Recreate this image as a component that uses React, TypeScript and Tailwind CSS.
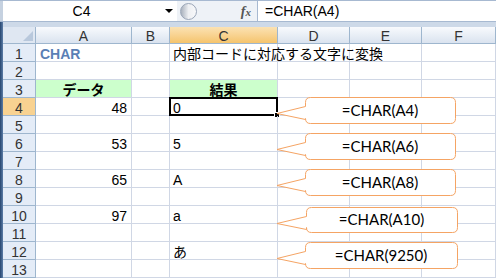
import React from 'react'

const FONT = '"Liberation Sans", "Noto Sans CJK JP", sans-serif'

interface Row {
  n: number
  a?: string
  c?: string
  head?: boolean
}

const rows: Row[] = [
  { n: 1, a: 'CHAR', c: '内部コードに対応する文字に変換' },
  { n: 2 },
  { n: 3, head: true },
  { n: 4, a: '48', c: '0' },
  { n: 5 },
  { n: 6, a: '53', c: '5' },
  { n: 7 },
  { n: 8, a: '65', c: 'A' },
  { n: 9 },
  { n: 10, a: '97', c: 'a' },
  { n: 11 },
  { n: 12, c: 'あ' },
  { n: 13 },
]

const cols = ['A', 'B', 'C', 'D', 'E', 'F']

// callouts: top edge, left, right, height, label
const callouts = [
  { top: 97, left: 305, right: 455, h: 26, text: '=CHAR(A4)' },
  { top: 133, left: 305, right: 455, h: 26, text: '=CHAR(A6)' },
  { top: 169, left: 305, right: 455, h: 26, text: '=CHAR(A8)' },
  { top: 207, left: 306, right: 457, h: 25, text: '=CHAR(A10)' },
  { top: 242, left: 305, right: 457, h: 26, text: '=CHAR(9250)' },
]

function calloutPath(c: { top: number; left: number; right: number; h: number }) {
  const x0 = c.left + 0.5
  const x1 = c.right + 0.5
  const y0 = c.top + 0.5
  const y1 = c.top + c.h + 0.5
  const r = 5
  const tipX = 277
  const tipY = y0 + 16
  return `M${x0 + r},${y0} H${x1 - r} Q${x1},${y0} ${x1},${y0 + r} V${y1 - r} Q${x1},${y1} ${x1 - r},${y1} H${x0 + r} Q${x0},${y1} ${x0},${y1 - r} V${y0 + 22} L${tipX},${tipY} L${x0},${y0 + 9} V${y0 + r} Q${x0},${y0} ${x0 + r},${y0} Z`
}

const FormulaBar: React.FC = () => (
  <div className="flex h-[22px] border-t border-b border-[#a7b9d1] bg-white text-[14px] text-black">
    <div className="w-[3px] bg-[#c5d1e0]" />
    <div className="flex w-[174px] items-center bg-white">
      <div className="flex-1 text-center">C4</div>
      <div className="flex w-[17px] justify-center">
        <div className="h-0 w-0 border-x-[4px] border-t-[4px] border-x-transparent border-t-black" />
      </div>
    </div>
    <div className="flex w-[80px] items-center bg-[#eef2f7]">
      <div className="ml-[3px] h-[17px] w-[17px] rounded-full border border-[#9aa6b8] bg-gradient-to-r from-[#a9b1bd] via-[#eef0f3] to-[#f7f8fa]" />
      <div
        className="ml-auto mr-[6px] text-[14px] font-bold italic text-[#555]"
        style={{ fontFamily: '"Liberation Serif", serif' }}
      >
        f<span className="text-[11px]">x</span>
      </div>
    </div>
    <div className="flex flex-1 items-center border-l border-[#a7b9d1] pl-[7px]">=CHAR(A4)</div>
  </div>
)

export default function App() {
  return (
    <div
      className="relative h-[278px] w-[496px] overflow-hidden bg-white"
      style={{ fontFamily: FONT }}
    >
      <FormulaBar />
      <div className="flex">
        <div className="w-[3px] shrink-0 bg-gradient-to-r from-[#27466f] to-[#5d7ea8]" />
        <div className="flex-1">
          <div className="h-[5px] bg-[#cdd9e8]" />
          <div className="grid grid-cols-[33px_96px_38px_108px_72px_72px_74px] text-[14px]">
            {/* corner */}
            <div className="relative h-[17px] border-r border-b border-[#9eb6ce] bg-[#dfe7f2]">
              <div className="absolute bottom-[2px] right-[2px] h-0 w-0 border-l-[10px] border-t-[10px] border-l-transparent border-t-transparent border-b-0 border-r-[10px] border-r-[#b8c8dc]" />
            </div>
            {cols.map((c) => (
              <div
                key={c}
                className={`flex h-[17px] items-center justify-center border-r border-b border-[#9eb6ce] pt-[1px] leading-none text-[#333] ${
                  c === 'C'
                    ? 'bg-gradient-to-b from-[#fbe2b3] to-[#f5c46c]'
                    : 'bg-gradient-to-b from-[#f8fafd] to-[#dae3ef]'
                }`}
              >
                {c}
              </div>
            ))}

            {rows.map((r) => (
              <React.Fragment key={r.n}>
                <div
                  className={`flex h-[18px] items-center justify-center border-r border-b border-[#9eb6ce] pt-[2px] leading-none text-[#333] ${
                    r.n === 4 ? 'bg-[#f8d291]' : 'bg-[#e4ecf7]'
                  }`}
                >
                  {r.n}
                </div>
                {/* A */}
                <div
                  className={`flex h-[18px] items-center border-r border-b border-[#d0d7e5] px-[4px] pt-[2px] leading-none ${
                    r.head ? 'justify-center bg-[#ccffcc] font-bold' : ''
                  } ${r.n === 1 ? 'font-bold text-[#5a7fb5]' : ''} ${r.a && r.n !== 1 ? 'justify-end' : ''}`}
                >
                  {r.head ? 'データ' : r.a}
                </div>
                {/* B */}
                <div className="h-[18px] border-r border-b border-[#d0d7e5]" />
                {/* C */}
                <div
                  className={`relative flex h-[18px] items-center border-r border-b border-[#d0d7e5] px-[3px] pt-[2px] leading-none whitespace-nowrap ${
                    r.head ? 'justify-center bg-[#ccffcc] font-bold' : ''
                  }`}
                >
                  <span className="relative z-10">{r.head ? '結果' : r.c}</span>
                  {r.n === 4 && (
                    <div className="absolute left-[-1px] top-[-1px] h-[19px] w-[109px] border-2 border-black">
                      <div className="absolute bottom-[-4px] right-[-4px] h-[6px] w-[6px] border border-white bg-black" />
                    </div>
                  )}
                </div>
                <div className="h-[18px] border-r border-b border-[#d0d7e5]" />
                <div className="h-[18px] border-r border-b border-[#d0d7e5]" />
                <div className="h-[18px] border-r border-b border-[#d0d7e5]" />
              </React.Fragment>
            ))}
          </div>
        </div>
      </div>

      {/* callouts */}
      <svg className="pointer-events-none absolute left-0 top-0" width={496} height={278}>
        {callouts.map((c) => (
          <path key={c.text} d={calloutPath(c)} fill="white" stroke="#f5a464" strokeWidth={1} />
        ))}
      </svg>
      {callouts.map((c) => (
        <div
          key={c.text}
          className="absolute flex items-center justify-center text-[15px] text-black"
          style={{ left: c.left, top: c.top, width: c.right - c.left, height: c.h, fontFamily: 'Lato, "Open Sans", sans-serif' }}
        >
          {c.text}
        </div>
      ))}
    </div>
  )
}
